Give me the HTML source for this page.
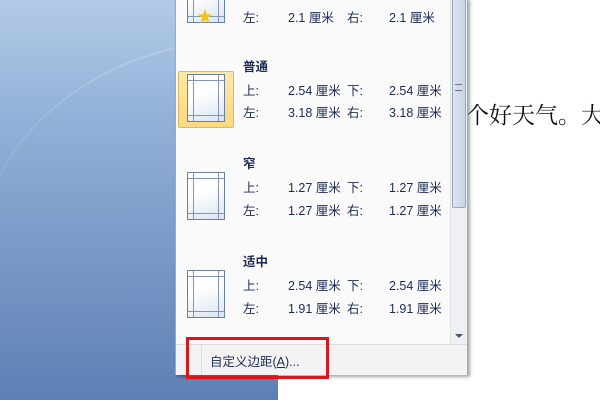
<!DOCTYPE html>
<html><head><meta charset="utf-8"><style>
html,body{margin:0;width:600px;height:400px;overflow:hidden;position:relative;background:#fff;font-family:"Liberation Sans","Noto Sans CJK SC",sans-serif}
.bg{position:absolute;left:0;top:0;width:278px;height:400px;background:linear-gradient(180deg,#b3cbe8 0%,#97b4da 25%,#7f9ecb 55%,#5d80b4 100%);overflow:hidden}
.sw{position:absolute;left:-20px;top:40px;width:500px;height:400px;border-radius:50%;border-top:2px solid rgba(255,255,255,.18);transform:rotate(-8deg)}
.doc{position:absolute;left:443px;top:97px;font:23px "Noto Serif CJK SC",serif;color:#111;white-space:nowrap}
.menu{position:absolute;left:175px;top:-2px;width:291px;height:375px;background:#fafafa;border:1px solid #a8a8a8;box-shadow:2px 2px 3px rgba(0,0,0,.35)}
.t{position:absolute;font-size:12.5px;color:#1e2a55;white-space:nowrap}
.h{font-weight:bold}
.pg{position:absolute;width:36px;height:46px;border:1px solid #6d7fa6;background:linear-gradient(160deg,#fff 40%,#d9e4f3)}
.pg:before{content:"";position:absolute;left:5px;right:5px;top:0;bottom:0;border-left:1px solid #8595b8;border-right:1px solid #8595b8}
.pg:after{content:"";position:absolute;left:0;right:0;top:5px;bottom:5px;border-top:1px solid #8595b8;border-bottom:1px solid #8595b8}
.hl{position:absolute;left:2px;top:72px;width:54px;height:55px;background:linear-gradient(#fde9a8,#fcd881);border:1px solid #e5b55a;border-radius:2px}
.sb{position:absolute;left:274px;top:0;width:16px;height:345px;background:#eef0f3;border-left:1px solid #e2e2e2}
.th{position:absolute;left:1px;top:0;width:12px;height:207px;background:linear-gradient(90deg,#dbe5f1,#c6d4e6);border:1px solid #98a8c0;border-radius:2px}
.foot{position:absolute;left:0;top:345px;width:291px;height:30px;background:#f3f3f3;border-top:1px solid #dcdcdc}
.red{position:absolute;left:186px;top:337px;width:137px;height:36px;border:3px solid #d8161b}
</style></head><body>
<div class="bg"><div class="sw"></div></div>
<div class="doc">是个好天气。大</div>
<div class="menu">
  <div class="pg" style="left:11px;top:-24px"></div>
  <div style="position:absolute;left:21px;top:4px;color:#f3c21a;font-size:16px">★</div>
  <div class="t" style="left:67px;top:8px">左:</div><div class="t" style="left:112px;top:8px">2.1 厘米</div><div class="t" style="left:171px;top:8px">右:</div><div class="t" style="left:213px;top:8px">2.1 厘米</div>

  <div class="hl"></div>
  <div class="pg" style="left:11px;top:75px"></div>
  <div class="t h" style="left:67px;top:57px">普通</div>
  <div class="t" style="left:67px;top:81px">上:</div><div class="t" style="left:112px;top:81px">2.54 厘米</div><div class="t" style="left:171px;top:81px">下:</div><div class="t" style="left:213px;top:81px">2.54 厘米</div>
  <div class="t" style="left:67px;top:103px">左:</div><div class="t" style="left:112px;top:103px">3.18 厘米</div><div class="t" style="left:171px;top:103px">右:</div><div class="t" style="left:213px;top:103px">3.18 厘米</div>

  <div class="pg" style="left:11px;top:173px"></div>
  <div class="t h" style="left:67px;top:154px">窄</div>
  <div class="t" style="left:67px;top:178px">上:</div><div class="t" style="left:112px;top:178px">1.27 厘米</div><div class="t" style="left:171px;top:178px">下:</div><div class="t" style="left:213px;top:178px">1.27 厘米</div>
  <div class="t" style="left:67px;top:201px">左:</div><div class="t" style="left:112px;top:201px">1.27 厘米</div><div class="t" style="left:171px;top:201px">右:</div><div class="t" style="left:213px;top:201px">1.27 厘米</div>

  <div class="pg" style="left:11px;top:271px"></div>
  <div class="t h" style="left:67px;top:252px">适中</div>
  <div class="t" style="left:67px;top:276px">上:</div><div class="t" style="left:112px;top:276px">2.54 厘米</div><div class="t" style="left:171px;top:276px">下:</div><div class="t" style="left:213px;top:276px">2.54 厘米</div>
  <div class="t" style="left:67px;top:299px">左:</div><div class="t" style="left:112px;top:299px">1.91 厘米</div><div class="t" style="left:171px;top:299px">右:</div><div class="t" style="left:213px;top:299px">1.91 厘米</div>

  <div class="sb"><div class="th"><div style="position:absolute;left:2px;top:84px;width:7px;height:5px;border-top:1px solid #777;border-bottom:1px solid #777"></div></div>
  <div style="position:absolute;left:4px;top:335px;border-left:4px solid transparent;border-right:4px solid transparent;border-top:4px solid #4d5670"></div></div>
  <div class="foot"><div style="position:absolute;left:25px;top:0;bottom:0;border-left:1px solid #ddd"></div><div class="t" style="left:34px;top:6px">自定义边距(<u>A</u>)...</div></div>
</div>
<div class="red"></div>
</body></html>
